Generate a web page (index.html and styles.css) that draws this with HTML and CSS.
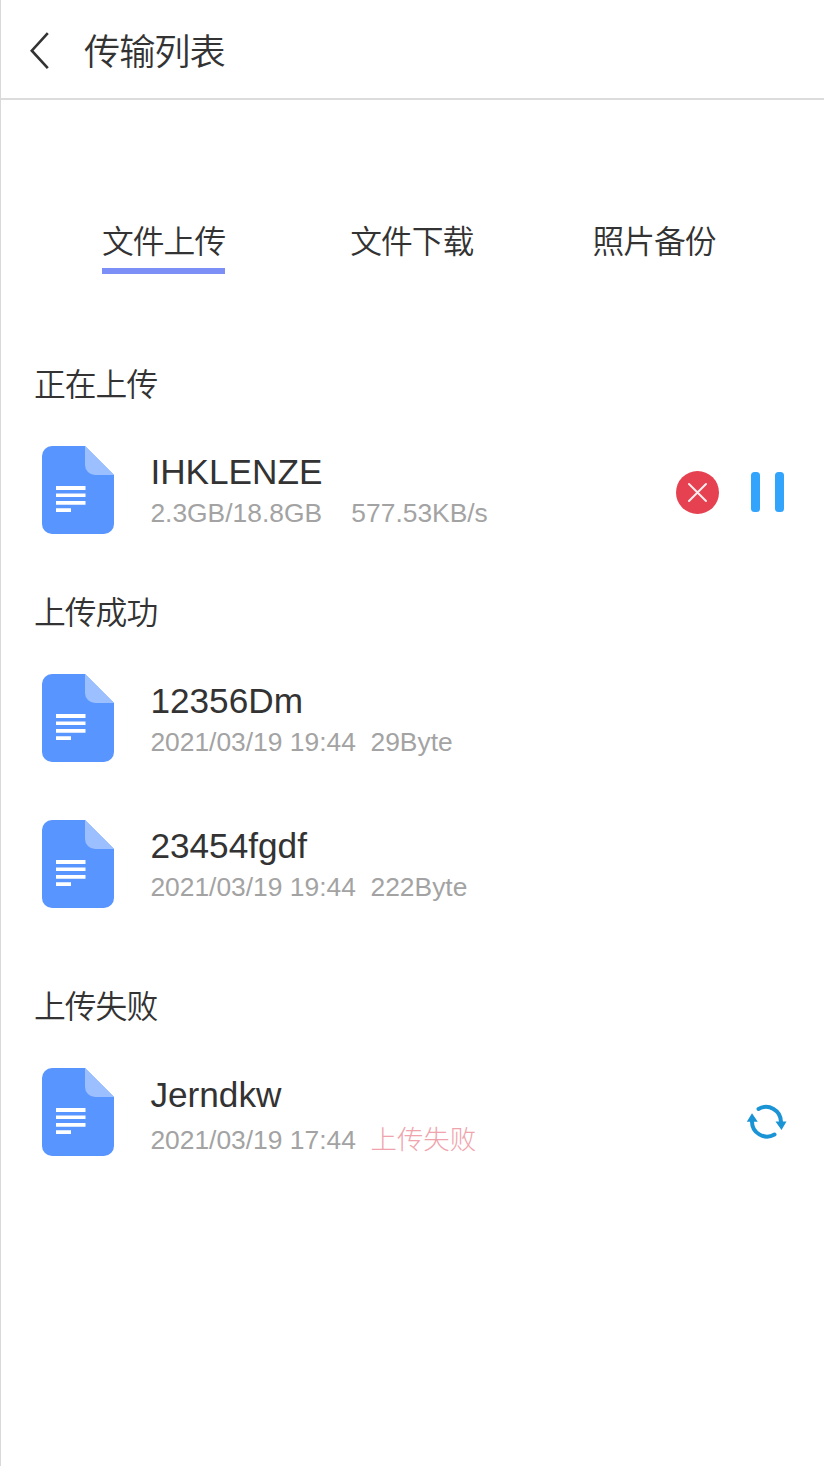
FILE: index.html
```html
<!DOCTYPE html>
<html lang="zh-CN">
<head>
  <meta charset="UTF-8">
  <meta name="viewport" content="width=device-width, initial-scale=1.0">
  <title>传输列表</title>
  <link rel="stylesheet" href="styles.css">
</head>
<body>
  <!-- shared file icon -->
  <svg class="sprite" width="0" height="0">
    <symbol id="file" viewBox="0 0 72 88">
      <path fill="#5995ff" d="M10 0H43L72 29V78a10 10 0 0 1-10 10H10A10 10 0 0 1 0 78V10A10 10 0 0 1 10 0z"/>
      <path fill="#9bbfff" d="M43 0L72 29H53a10 10 0 0 1-10-10z"/>
      <path fill="#fff" d="M14 40h29.500v4H14zM14 47.500h29.500v3.500H14zM14 55h29.500v3.700H14zM14 62.300h15v3.700H14z"/>
    </symbol>
  </svg>

  <div class="page">
    <header class="header">
      <svg class="back" width="20" height="38" viewBox="0 0 20 38">
        <path d="M18.800 1.200L2.800 18.700l16 17.500" fill="none" stroke="#333" stroke-width="2.600"/>
      </svg>
      <h1>传输列表</h1>
    </header>

    <nav class="tabs">
      <a class="tab active">文件上传</a>
      <a class="tab">文件下载</a>
      <a class="tab">照片备份</a>
    </nav>

    <section class="group uploading">
      <h2>正在上传</h2>
      <div class="item">
        <svg class="file-icon"><use href="#file"/></svg>
        <div class="info">
          <div class="name">IHKLENZE</div>
          <div class="meta">2.3GB/18.8GB&nbsp;&nbsp;&nbsp;&nbsp;577.53KB/s</div>
        </div>
        <div class="actions">
          <svg width="43" height="43" viewBox="0 0 43 43">
            <circle cx="21.500" cy="21.500" r="21.500" fill="#e54150"/>
            <path d="M13 13l17 17M30 13L13 30" stroke="#fff" stroke-opacity=".9" stroke-width="2" stroke-linecap="round"/>
          </svg>
          <svg width="33" height="40" viewBox="0 0 33 40">
            <rect width="9" height="40" rx="3.500" fill="#33a4fb"/>
            <rect x="24" width="9" height="40" rx="3.500" fill="#33a4fb"/>
          </svg>
        </div>
      </div>
    </section>

    <section class="group done">
      <h2>上传成功</h2>
      <div class="item">
        <svg class="file-icon"><use href="#file"/></svg>
        <div class="info">
          <div class="name">12356Dm</div>
          <div class="meta">2021/03/19 19:44&nbsp;&nbsp;29Byte</div>
        </div>
      </div>
      <div class="item">
        <svg class="file-icon"><use href="#file"/></svg>
        <div class="info">
          <div class="name">23454fgdf</div>
          <div class="meta">2021/03/19 19:44&nbsp;&nbsp;222Byte</div>
        </div>
      </div>
    </section>

    <section class="group failed">
      <h2>上传失败</h2>
      <div class="item">
        <svg class="file-icon"><use href="#file"/></svg>
        <div class="info">
          <div class="name">Jerndkw</div>
          <div class="meta">2021/03/19 17:44&nbsp;&nbsp;<span class="error">上传失败</span></div>
        </div>
        <div class="actions">
          <svg class="retry" width="40" height="36" viewBox="0 0 40 36">
            <g fill="none" stroke="#1b94d5" stroke-width="4" stroke-linecap="round">
              <path d="M11.500 5A15 15 0 0 1 34 18"/>
              <path d="M5 17A15 15 0 0 0 27.500 30.500"/>
            </g>
            <path fill="#1b94d5" d="M28.500 17.500h11L34.500 26zM-.2 17.700h11L5 9.200z"/>
          </svg>
        </div>
      </div>
    </section>
  </div>
</body>
</html>
```
FILE: styles.css
```css
* {
  box-sizing: border-box;
}

body {
  margin: 0;
  background: #fff;
  color: #333;
  font-family: "Liberation Sans", "Noto Sans CJK SC", sans-serif;
}

.sprite {
  display: block;
}

.page {
  min-height: 1466px;
  border-left: 1px solid #d9d9d9;
}

h1, h2 {
  margin: 0;
  font-weight: 350;
}

.header {
  display: flex;
  align-items: center;
  height: 100px;
  padding-left: 28px;
  border-bottom: 2px solid #dcdcdc;
}

.back {
  margin-top: 4px;
  margin-right: 35px;
}

h1 {
  padding-top: 7px;
  font-size: 36.2px;
  line-height: 48px;
  letter-spacing: -1px;
}

.tabs {
  display: flex;
  padding: 120px 0 0 101px;
  font-size: 31.8px;
  font-weight: 350;
  letter-spacing: -1px;
  white-space: nowrap;
}

.tab {
  flex-shrink: 0;
  height: 54px;
  margin-right: 119px;
  line-height: 44px;
  border-bottom: 6px solid transparent;
}

.tab.active {
  margin-right: 125px;
  border-bottom-color: #7b8ff7;
}

.group {
  padding: 0 40px 0 33px;
}

.uploading {
  padding-top: 91px;
}

.done {
  padding-top: 59px;
}

.failed {
  padding-top: 79px;
}

h2 {
  height: 40px;
  margin-bottom: 41px;
  font-size: 31.8px;
  line-height: 41px;
  letter-spacing: -1px;
}

.item {
  display: flex;
  height: 88px;
  padding-left: 8px;
}

.item + .item {
  margin-top: 58px;
}

.file-icon {
  width: 72px;
  height: 88px;
  margin-right: 36.4px;
}

.info {
  flex: 1;
  padding-top: 6px;
  white-space: nowrap;
}

.name {
  font-size: 35.2px;
  line-height: 41px;
}

.uploading .name,
.item + .item .name {
  line-height: 39px;
  margin-bottom: 2px;
}

.meta {
  font-size: 26.4px;
  line-height: 41px;
  color: #a3a3a3;
}

.done .item:nth-of-type(1) .meta {
  margin-top: 1px;
}

.failed .meta {
  margin-top: 5px;
}

.error {
  color: #f0a3ac;
  font-weight: 300;
}

.actions {
  display: flex;
  align-items: center;
  gap: 32px;
  padding-top: 4px;
}

.retry {
  margin-top: 15px;
  margin-right: -3px;
  overflow: visible;
}
```
